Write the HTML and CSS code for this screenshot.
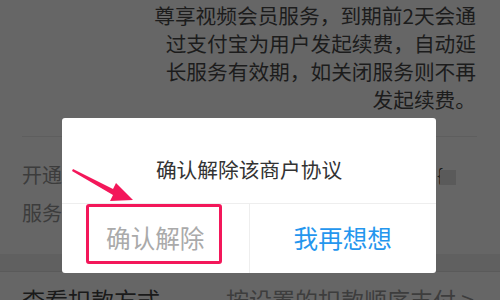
FILE: index.html
```html
<!DOCTYPE html>
<html lang="zh">
<head>
<meta charset="utf-8">
<link rel="stylesheet" href="styles.css">
</head>
<body>
<div class="page">
  <div class="desc">
    <div>尊享视频会员服务，到期前2天会通</div>
    <div>过支付宝为用户发起续费，自动延</div>
    <div>长服务有效期，如关闭服务则不再</div>
    <div>发起续费。</div>
  </div>
  <div class="list">
    <div class="row"><span class="label">开通时间</span><span class="val">{<i class="blot"></i></span></div>
    <div class="row"><span class="label">服务状态</span></div>
  </div>
  <div class="band"></div>
  <div class="row bottom"><span class="big">查看扣款方式</span><span class="sub">按设置的扣款顺序支付 &gt;</span></div>
</div>

<div class="dialog">
  <div class="title">确认解除该商户协议</div>
  <div class="actions">
    <div class="btn cancel">确认解除</div>
    <div class="btn ok">我再想想</div>
  </div>
</div>

<div class="mark"></div>
<svg class="arrow" width="70" height="50" viewBox="0 0 70 50">
  <polygon points="2,10 3,8 43,28 46,22 63,39 40,40 43,34" fill="#f3175a"/>
</svg>
</body>
</html>
```
FILE: styles.css
```css
html, body {
  margin: 0;
  padding: 0;
}
body {
  width: 500px;
  height: 300px;
  overflow: hidden;
  background: #666666;
  font-family: "Noto Sans CJK SC", "Noto Sans", sans-serif;
  position: relative;
}
.page {
  display: flex;
  flex-direction: column;
}
.desc {
  padding: 1px 24px 0 0;
  text-align: right;
  font-size: 20.7px;
  line-height: 28px;
  color: #1c1c1c;
  height: 136px;
  box-sizing: border-box;
}
.list {
  margin-left: 22px;
  margin-right: 23px;
  border-top: 1px solid #5e5e5e;
  padding-top: 18px;
  height: 118px;
  box-sizing: border-box;
}
.row {
  display: flex;
  align-items: center;
  height: 38px;
  justify-content: space-between;
}
.label {
  font-size: 20px;
  color: #3c3c3c;
}
.val {
  font-size: 18px;
  color: #1c1c1c;
  display: flex;
  align-items: center;
  margin-right: 21px;
}
.blot {
  display: inline-block;
  width: 16px;
  height: 15px;
  margin-left: -3px;
  margin-top: 6px;
  background: #5a5a5a;
}
.band {
  height: 17px;
  background: #606060;
  border-bottom: 1px solid #5a5a5a;
}
.bottom {
  padding: 12px 26px 0 22px;
  height: 60px;
  box-sizing: border-box;
  align-items: flex-start;
}
.big {
  font-size: 23px;
  line-height: 30px;
  color: #1a1a1a;
}
.sub {
  font-size: 23px;
  line-height: 30px;
  color: #3d3d3d;
}
.dialog {
  position: absolute;
  left: 62px;
  top: 118px;
  width: 374px;
  height: 155px;
  background: #ffffff;
  border-radius: 3px;
  display: flex;
  flex-direction: column;
}
.title {
  height: 86px;
  box-sizing: border-box;
  padding-top: 36px;
  text-align: center;
  font-size: 20.7px;
  line-height: 30px;
  color: #333333;
  border-bottom: 1px solid #eeeeee;
}
.actions {
  flex: 1;
  display: flex;
}
.btn {
  flex: 1;
  display: flex;
  align-items: center;
  justify-content: center;
  font-size: 24.6px;
  padding-bottom: 3px;
}
.cancel {
  color: #aaaaaa;
  border-right: 1px solid #eeeeee;
}
.ok {
  color: #2496ee;
}
.mark {
  position: absolute;
  left: 86px;
  top: 204px;
  width: 136px;
  height: 60px;
  box-sizing: border-box;
  border: 3px solid #f3175a;
  border-radius: 3px;
}
.arrow {
  position: absolute;
  left: 70px;
  top: 161px;
}
```
